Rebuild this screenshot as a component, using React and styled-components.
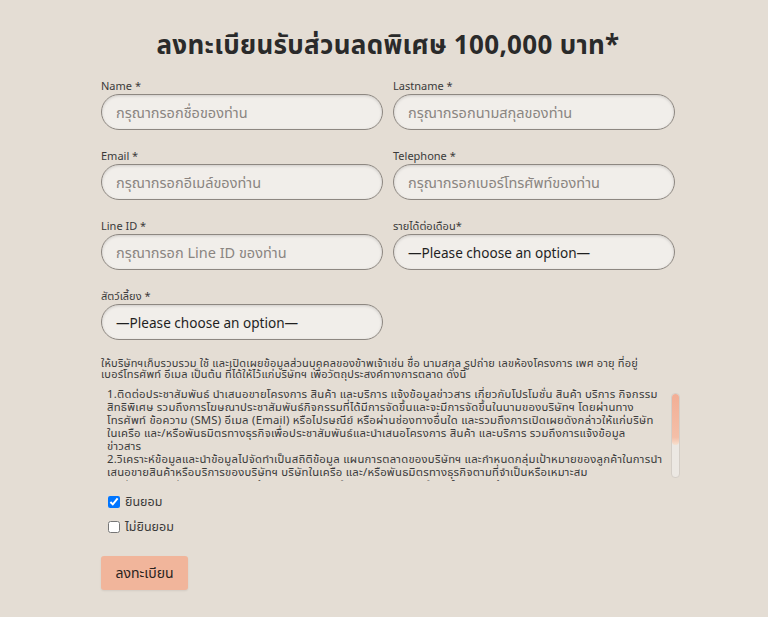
import React from "react";
import styled, { createGlobalStyle } from "styled-components";

const GlobalStyle = createGlobalStyle`
  html, body {
    margin: 0;
    padding: 0;
    background: #e4ddd4;
    font-family: "Noto Sans", "Noto Sans Thai", "DejaVu Sans", sans-serif;
    color: #333;
  }
`;

const Page = styled.div`
  width: 582px;
  padding: 26px 0 20px 101px;
`;

const Title = styled.h1`
  width: 574px;
  margin: 0 0 13px;
  text-align: center;
  font-size: 26px;
  font-weight: 700;
  color: #2a2a2a;
  letter-spacing: 0.3px;
`;

const Grid = styled.div`
  width: 574px;
  display: grid;
  grid-template-columns: 282px 282px;
  column-gap: 10px;
  row-gap: 19px;
`;

const Field = styled.label`
  display: flex;
  flex-direction: column;
  gap: 1px;
`;

const Label = styled.span`
  font-size: 11px;
  color: #3a3a3a;
  line-height: 14px;
`;

const Input = styled.input`
  box-sizing: border-box;
  height: 36px;
  width: 100%;
  border: 1px solid #8d8781;
  border-radius: 18px;
  background: #f1eeea;
  box-shadow: inset 0 1px 3px rgba(0, 0, 0, 0.15);
  padding: 0 14px;
  font-family: inherit;
  font-size: 14.5px;
  color: #333;
  outline: none;
  &::placeholder {
    color: #8a8581;
  }
`;

const Select = styled.div`
  box-sizing: border-box;
  height: 36px;
  width: 100%;
  border: 1px solid #8d8781;
  border-radius: 18px;
  background: #f1eeea;
  box-shadow: inset 0 1px 3px rgba(0, 0, 0, 0.15);
  padding: 0 14px;
  display: flex;
  align-items: center;
  font-size: 13.6px;
  color: #1f1f1f;
`;

const Consent = styled.p`
  margin: 17px 0 0;
  font-size: 11px;
  letter-spacing: 0.2px;
  line-height: 11px;
  color: #3a3a3a;
  white-space: nowrap;
`;

const ScrollBox = styled.div`
  width: 582px;
  height: 94px;
  margin-top: 8px;
  display: flex;
  gap: 4px;
`;

const ScrollText = styled.div`
  flex: 1;
  overflow: hidden;
  padding: 0 0 0 6px;
  font-size: 11.3px;
  letter-spacing: 0.25px;
  line-height: 13px;
  color: #3a3a3a;
  white-space: nowrap;
`;

const Track = styled.div`
  width: 7px;
  margin: 6px 3px 3px 0;
  border: 1px solid #d4cec7;
  border-radius: 4px;
  background: #ece8e3;
  display: flex;
  flex-direction: column;
`;

const Thumb = styled.div`
  height: 62%;
  border-radius: 4px;
  background: linear-gradient(#f2ae95, #f4bfa8 85%, #f6e0cf);
`;

const Checks = styled.div`
  margin-top: 11px;
  padding-left: 7px;
  display: flex;
  flex-direction: column;
  gap: 6px;
`;

const CheckRow = styled.label`
  display: flex;
  align-items: center;
  gap: 5px;
  font-size: 12.5px;
  line-height: 19px;
  color: #3a3a3a;
  input {
    margin: 0;
    width: 12px;
    height: 12px;
  }
`;

const Button = styled.button`
  margin-top: 20px;
  width: 87px;
  height: 34px;
  border: none;
  border-radius: 3px;
  background: #f1b59b;
  box-shadow: 0 1px 2px rgba(0, 0, 0, 0.08);
  font-family: inherit;
  font-size: 14px;
  color: #2a2320;
`;

const TextField = ({ label, placeholder }) => (
  <Field>
    <Label>{label}</Label>
    <Input placeholder={placeholder} />
  </Field>
);

const SelectField = ({ label }) => (
  <Field>
    <Label>{label}</Label>
    <Select>—Please choose an option—</Select>
  </Field>
);

const terms = [
  "1.ติดต่อประชาสัมพันธ์ นำเสนอขายโครงการ สินค้า และบริการ แจ้งข้อมูลข่าวสาร เกี่ยวกับโปรโมชั่น สินค้า บริการ กิจกรรม",
  "สิทธิพิเศษ รวมถึงการโฆษณาประชาสัมพันธ์กิจกรรมที่ได้มีการจัดขึ้นและจะมีการจัดขึ้นในนามของบริษัทฯ โดยผ่านทาง",
  "โทรศัพท์ ข้อความ (SMS) อีเมล (Email) หรือไปรษณีย์ หรือผ่านช่องทางอื่นใด และรวมถึงการเปิดเผยดังกล่าวให้แก่บริษัท",
  "ในเครือ และ/หรือพันธมิตรทางธุรกิจเพื่อประชาสัมพันธ์และนำเสนอโครงการ สินค้า และบริการ รวมถึงการแจ้งข้อมูล",
  "ข่าวสาร",
  "2.วิเคราะห์ข้อมูลและนำข้อมูลไปจัดทำเป็นสถิติข้อมูล แผนการตลาดของบริษัทฯ และกำหนดกลุ่มเป้าหมายของลูกค้าในการนำ",
  "เสนอขายสินค้าหรือบริการของบริษัทฯ บริษัทในเครือ และ/หรือพันธมิตรทางธุรกิจตามที่จำเป็นหรือเหมาะสม",
  "3.ปรับปรุงและพัฒนาคุณภาพสินค้าและบริการ รวมถึงการสำรวจความพึงพอใจของลูกค้า",
];

const App = () => {
  return (
    <Page>
      <GlobalStyle />
      <Title>ลงทะเบียนรับส่วนลดพิเศษ 100,000 บาท*</Title>
      <Grid>
        <TextField label="Name *" placeholder="กรุณากรอกชื่อของท่าน" />
        <TextField label="Lastname *" placeholder="กรุณากรอกนามสกุลของท่าน" />
        <TextField label="Email *" placeholder="กรุณากรอกอีเมล์ของท่าน" />
        <TextField label="Telephone *" placeholder="กรุณากรอกเบอร์โทรศัพท์ของท่าน" />
        <TextField label="Line ID *" placeholder="กรุณากรอก Line ID ของท่าน" />
        <SelectField label="รายได้ต่อเดือน*" />
        <SelectField label="สัตว์เลี้ยง *" />
      </Grid>
      <Consent>
        ให้บริษัทฯเก็บรวบรวม ใช้ และเปิดเผยข้อมูลส่วนบุคคลของข้าพเจ้าเช่น ชื่อ นามสกุล รูปถ่าย เลขห้องโครงการ เพศ อายุ ที่อยู่
        <br />
        เบอร์โทรศัพท์ อีเมล เป็นต้น ที่ได้ให้ไว้แก่บริษัทฯ เพื่อวัตถุประสงค์ทางการตลาด ดังนี้
      </Consent>
      <ScrollBox>
        <ScrollText>
          {terms.map((line, i) => (
            <div key={i}>{line}</div>
          ))}
        </ScrollText>
        <Track>
          <Thumb />
        </Track>
      </ScrollBox>
      <Checks>
        <CheckRow>
          <input type="checkbox" defaultChecked />
          ยินยอม
        </CheckRow>
        <CheckRow>
          <input type="checkbox" />
          ไม่ยินยอม
        </CheckRow>
      </Checks>
      <Button>ลงทะเบียน</Button>
    </Page>
  );
};

export default App;
